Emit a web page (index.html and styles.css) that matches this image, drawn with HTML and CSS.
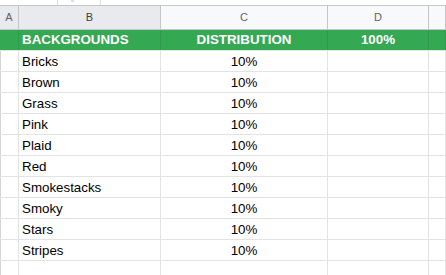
FILE: index.html
```html
<!DOCTYPE html>
<html>
<head>
<meta charset="utf-8">
<link rel="stylesheet" href="styles.css">
</head>
<body>
<div class="topstrip"><div class="tab"><span class="mark"></span></div></div>
<div class="sheet">
  <div class="row colhead">
    <div class="c a sel">A</div>
    <div class="c b sel dark">B</div>
    <div class="c cc">C</div>
    <div class="c d">D</div>
    <div class="c e"></div>
  </div>
  <div class="row green">
    <div class="c a"></div>
    <div class="c b">BACKGROUNDS</div>
    <div class="c cc ctr">DISTRIBUTION</div>
    <div class="c d ctr">100%</div>
    <div class="c e"></div>
  </div>
  <div class="row data"><div class="c a"></div><div class="c b">Bricks</div><div class="c cc ctr">10%</div><div class="c d"></div><div class="c e"></div></div>
  <div class="row data"><div class="c a"></div><div class="c b">Brown</div><div class="c cc ctr">10%</div><div class="c d"></div><div class="c e"></div></div>
  <div class="row data"><div class="c a"></div><div class="c b">Grass</div><div class="c cc ctr">10%</div><div class="c d"></div><div class="c e"></div></div>
  <div class="row data"><div class="c a"></div><div class="c b">Pink</div><div class="c cc ctr">10%</div><div class="c d"></div><div class="c e"></div></div>
  <div class="row data"><div class="c a"></div><div class="c b">Plaid</div><div class="c cc ctr">10%</div><div class="c d"></div><div class="c e"></div></div>
  <div class="row data"><div class="c a"></div><div class="c b">Red</div><div class="c cc ctr">10%</div><div class="c d"></div><div class="c e"></div></div>
  <div class="row data"><div class="c a"></div><div class="c b">Smokestacks</div><div class="c cc ctr">10%</div><div class="c d"></div><div class="c e"></div></div>
  <div class="row data"><div class="c a"></div><div class="c b">Smoky</div><div class="c cc ctr">10%</div><div class="c d"></div><div class="c e"></div></div>
  <div class="row data"><div class="c a"></div><div class="c b">Stars</div><div class="c cc ctr">10%</div><div class="c d"></div><div class="c e"></div></div>
  <div class="row data"><div class="c a"></div><div class="c b">Stripes</div><div class="c cc ctr">10%</div><div class="c d"></div><div class="c e"></div></div>
  <div class="row data"><div class="c a"></div><div class="c b"></div><div class="c cc ctr"></div><div class="c d"></div><div class="c e"></div></div>
</div>
</body>
</html>
```
FILE: styles.css
```css
html, body {
  margin: 0;
  padding: 0;
  background: #ffffff;
  width: 446px;
  height: 275px;
  overflow: hidden;
  font-family: "Liberation Sans", Arial, sans-serif;
}
.topstrip {
  height: 5px;
  padding-left: 57px;
  display: flex;
}
.tab {
  width: 42px;
  height: 5px;
  border-left: 1px solid #dadce0;
  border-right: 1px solid #dadce0;
  position: relative;
}
.mark {
  position: absolute;
  left: 13px;
  top: 0;
  width: 3px;
  height: 2px;
  background: #e0e0e0;
}
.sheet {
  display: flex;
  flex-direction: column;
}
.row {
  display: grid;
  grid-template-columns: 19px 142px 167px 101px 1fr;
}
.c {
  box-sizing: border-box;
  border-right: 1px solid #e2e3e3;
  white-space: nowrap;
  overflow: hidden;
}
.ctr { text-align: center; }
.colhead {
  height: 25px;
  border-top: 1px solid #c4c7c5;
  border-bottom: 1px solid #c4c7c5;
  box-sizing: border-box;
  background: #f8f9fa;
}
.colhead .c {
  border-right: 1px solid #c4c7c5;
  font-size: 11px;
  color: #5f6368;
  line-height: 23px;
  text-align: center;
}
.colhead .sel { background: #e8eaed; }
.colhead .dark { color: #3c4043; }
.green {
  height: 21px;
  background: #34a853;
  border-bottom: 1px solid #e2e3e3;
  box-sizing: border-box;
}
.green .c {
  border-right: 1px solid #2f9a4c;
  color: #ffffff;
  font-weight: bold;
  font-size: 13.33px;
  line-height: 20px;
}
.green .b { padding-left: 3px; }
.data {
  height: 21px;
  border-bottom: 1px solid #e2e3e3;
  box-sizing: border-box;
}
.data .c {
  font-size: 13.33px;
  color: #000000;
  line-height: 21px;
}
.data .a { border-left: 1px solid #d5d5d5; }
.data .b { padding-left: 3px; }
```
